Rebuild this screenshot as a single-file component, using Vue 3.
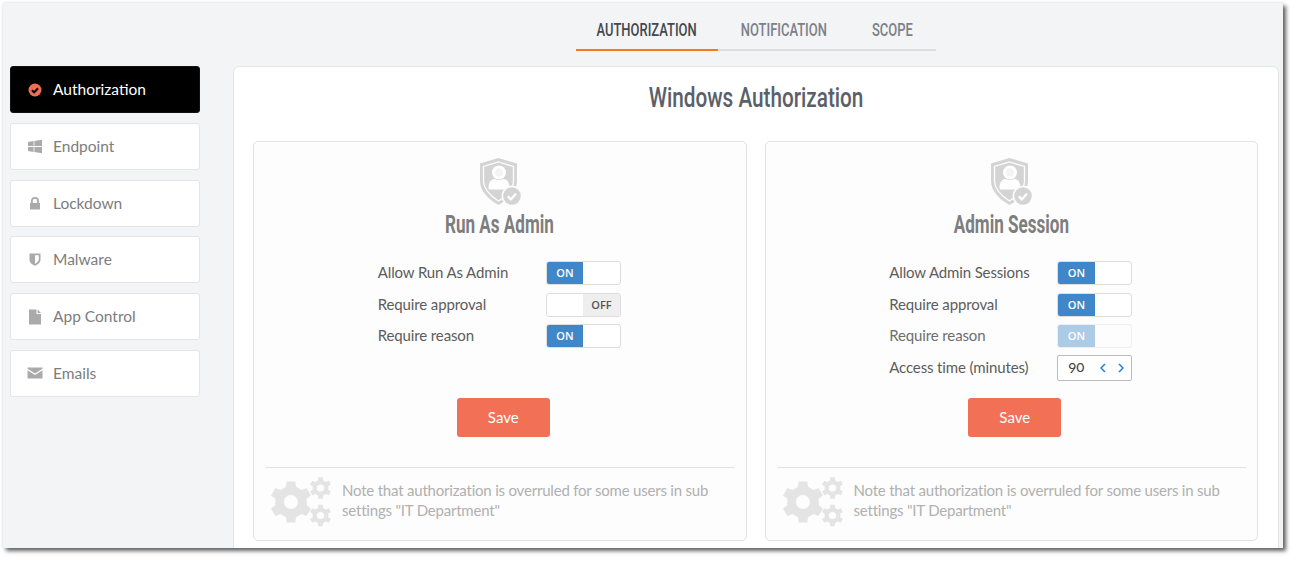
<script setup>
const nav = [
  { label: 'Authorization', icon: 'check', active: true },
  { label: 'Endpoint', icon: 'windows' },
  { label: 'Lockdown', icon: 'lock' },
  { label: 'Malware', icon: 'shield' },
  { label: 'App Control', icon: 'file' },
  { label: 'Emails', icon: 'mail' }
]
const tabs = [
  { label: 'AUTHORIZATION', width: 142, active: true },
  { label: 'NOTIFICATION', width: 131 },
  { label: 'SCOPE', width: 87 }
]
const cards = [
  {
    title: 'Run As Admin',
    rows: [
      { label: 'Allow Run As Admin', state: 'on' },
      { label: 'Require approval', state: 'off' },
      { label: 'Require reason', state: 'on' }
    ]
  },
  {
    title: 'Admin Session',
    rows: [
      { label: 'Allow Admin Sessions', state: 'on' },
      { label: 'Require approval', state: 'on' },
      { label: 'Require reason', state: 'on', disabled: true },
      { label: 'Access time (minutes)', state: 'number', value: 90 }
    ]
  }
]
function gear(cx, cy, outer, inner, hole, teeth) {
  const pts = []
  const step = (Math.PI * 2) / teeth
  for (let i = 0; i < teeth; i++) {
    const a = i * step - Math.PI / 2
    const w = step * 0.2
    const w2 = step * 0.3
    const add = (r, t) => pts.push((cx + r * Math.cos(t)).toFixed(2) + ' ' + (cy + r * Math.sin(t)).toFixed(2))
    add(inner, a - w2)
    add(outer, a - w)
    add(outer, a + w)
    add(inner, a + w2)
  }
  const ring = `M${cx - hole} ${cy}a${hole} ${hole} 0 1 0 ${hole * 2} 0a${hole} ${hole} 0 1 0 ${-hole * 2} 0z`
  return 'M' + pts.join('L') + 'z' + ring
}
const gears = gear(21, 25, 21, 16, 7, 6) + gear(50.5, 11, 11, 8, 3.6, 6) + gear(50.5, 38.5, 11, 8, 3.6, 6)
</script>

<template>
  <div class="page">
    <div class="window">
      <nav class="tabs">
        <div class="tabbar">
          <a
            v-for="t in tabs"
            :key="t.label"
            class="tab"
            :class="{ active: t.active }"
            :style="{ width: t.width + 'px' }"
          ><span class="narrow">{{ t.label }}</span></a>
        </div>
      </nav>
      <div class="body">
        <aside class="side">
          <a v-for="n in nav" :key="n.label" class="item" :class="{ active: n.active }">
            <span class="ico">
              <svg v-if="n.icon === 'check'" width="14" height="14" viewBox="0 0 14 14">
                <circle cx="7" cy="7" r="6.5" fill="#f26e52" />
                <path d="M3.9 7.2l2.2 2.2 4-4.2" fill="none" stroke="#000" stroke-width="2" />
              </svg>
              <svg v-else-if="n.icon === 'windows'" width="16" height="15" viewBox="0 0 16 15">
                <path fill="#aaa" d="M1 3l5.6-.9v5H1zM7.4 2l7.6-1.2v6.3H7.4zM1 8h5.6v5L1 12.100zM7.400 8H15v6.200l-7.600-1.200z" />
              </svg>
              <svg v-else-if="n.icon === 'lock'" width="12" height="13" viewBox="0 0 12 13">
                <path fill="#aaa" d="M1 6h1V4a4 4 0 0 1 8 0v2h1v6.500H1zM3.800 6h4.400V4a2.200 2.200 0 0 0-4.400 0z" />
              </svg>
              <svg v-else-if="n.icon === 'shield'" width="12" height="13" viewBox="0 0 12 13">
                <path fill="#aaa" fill-rule="evenodd" d="M.5.500h11v6.200c0 3-3 5-5.500 6C3.500 11.700.5 9.700.5 6.700zM6 2.200v8.700c1.700-.9 3.800-2.400 3.800-4.300V2.200z" />
              </svg>
              <svg v-else-if="n.icon === 'file'" width="14" height="16" viewBox="0 0 14 16">
                <path fill="#aaa" d="M1 .5h7.500v4.500H13v10.500H1zM9.600.500L13 3.900H9.600z" />
              </svg>
              <svg v-else width="16" height="12" viewBox="0 0 16 12">
                <path fill="#aaa" d="M.500.500h15v1.300L8 6.500.500 1.800zM.500 3.300L8 8l7.500-4.700v8.200H.500z" />
              </svg>
            </span>
            <span class="itemtext">{{ n.label }}</span>
          </a>
        </aside>
        <main class="panel">
          <h1 class="heading"><span class="narrow">Windows Authorization</span></h1>
          <div class="cards">
            <section v-for="c in cards" :key="c.title" class="card">
              <svg class="badge" width="44" height="50" viewBox="0 0 44 50">
                <path fill="#d4d4d4" d="M20.500 1L39 6.500V24c0 10-8 18-18.500 24C10 42 2 34 2 24V6.500z" />
                <path fill="none" stroke="#fdfdfd" stroke-width="1.300" d="M20.500 5L35.500 9.500V24c0 8-6.500 14.500-15 20C12 38.500 5.500 32 5.500 24V9.500z" />
                <circle cx="21" cy="15.500" r="7" fill="#fff" />
                <circle cx="21" cy="15.500" r="4.200" fill="#f4f4f4" />
                <path fill="#fff" d="M10.500 31c0-6 3-9 6-9 2.500 1.500 6.500 1.500 9 0 3 0 6 3 6 9 0 1-1 1.500-2 1.500H12.500c-1 0-2-.5-2-1.500z" />
                <circle cx="34" cy="39" r="10.500" fill="#fdfdfd" />
                <circle cx="34" cy="39" r="8.800" fill="#d4d4d4" />
                <path d="M29.800 39.300l3 3 5.200-5.600" fill="none" stroke="#fff" stroke-width="2.200" />
              </svg>
              <h2 class="title"><span class="narrow">{{ c.title }}</span></h2>
              <div class="form">
                <div v-for="r in c.rows" :key="r.label" class="row">
                  <span class="lbl" :class="{ dim: r.disabled }">{{ r.label }}</span>
                  <div v-if="r.state === 'number'" class="num">
                    <span class="val">{{ r.value }}</span>
                    <svg width="6" height="10" viewBox="0 0 6 10"><path d="M5 1L1 5l4 4" fill="none" stroke="#1b7fdc" stroke-width="1.500" /></svg>
                    <svg width="6" height="10" viewBox="0 0 6 10"><path d="M1 1l4 4-4 4" fill="none" stroke="#1b7fdc" stroke-width="1.500" /></svg>
                  </div>
                  <div v-else class="toggle" :class="{ disabled: r.disabled }">
                    <template v-if="r.state === 'on'">
                      <span class="half on">ON</span><span class="half"></span>
                    </template>
                    <template v-else>
                      <span class="half"></span><span class="half off">OFF</span>
                    </template>
                  </div>
                </div>
              </div>
              <button class="save" type="button">Save</button>
              <div class="note">
                <svg class="gears" width="62" height="50" viewBox="0 0 62 50"><path fill="#e4e4e4" fill-rule="evenodd" :d="gears" /></svg>
                <p>Note that authorization is overruled for some users in sub settings "IT Department"</p>
              </div>
            </section>
          </div>
        </main>
      </div>
    </div>
  </div>
</template>

<style>
html, body { background: #fff; }
</style>

<style scoped>
.page {
  box-sizing: border-box;
  width: 1297px;
  height: 563px;
  padding: 3px 0 0 3px;
  overflow: hidden;
  background: #fff;
}
.window {
  box-sizing: border-box;
  width: 1280px;
  height: 545px;
  background: #f3f4f6;
  overflow: hidden;
  box-shadow: 3px 3px 4px rgba(0, 0, 0, .6), 0 0 3px rgba(0, 0, 0, .12);
  font-family: Lato, "Open Sans", sans-serif;
  color: #666;
}
.narrow { display: inline-block; white-space: nowrap; }
.tabs { height: 63px; display: flex; justify-content: center; padding-left: 226px; }
.tabbar { display: flex; height: 48px; }
.tab {
  box-sizing: border-box;
  height: 48px;
  line-height: 53px;
  text-align: center;
  border-bottom: 2px solid #ddd;
  font-family: Roboto, sans-serif;
  font-size: 18px;
  font-weight: 500;
  color: #7c8188;
}
.tab .narrow { transform: scaleX(.72); }
.tab.active { color: #43484e; border-bottom-color: #f47c20; }
.body { display: flex; padding-left: 7px; }
.side { width: 190px; display: flex; flex-direction: column; gap: 9.800px; margin-right: 33px; }
.item {
  box-sizing: border-box;
  height: 47px;
  display: flex;
  align-items: center;
  background: #fff;
  border: 1px solid #e5e5e5;
  border-radius: 3px;
  font-size: 15.500px;
  color: #7d7d7d;
}
.itemtext { padding-bottom: 1px; }
.item.active { background: #000; border-color: #111; color: #fff; }
.ico { width: 42px; display: flex; justify-content: center; padding-left: 6px; box-sizing: border-box; }
.panel {
  box-sizing: border-box;
  width: 1046px;
  height: 600px;
  background: #fff;
  border: 1px solid #e5e5e5;
  border-radius: 6px;
  padding: 0 19px;
}
.heading {
  margin: 13px 0 0;
  height: 61px;
  text-align: center;
  font-family: Roboto, sans-serif;
  font-size: 28px;
  line-height: 36px;
  font-weight: 500;
  color: #5a6068;
}
.heading .narrow { transform: scaleX(.74); }
.cards { display: flex; gap: 18px; }
.card {
  box-sizing: border-box;
  width: 493.500px;
  height: 400px;
  background: #fdfdfd;
  border: 1px solid #e2e2e2;
  border-radius: 5px;
  padding: 15px 11px 0;
  display: flex;
  flex-direction: column;
  align-items: center;
}
.badge { flex: none; }
.title {
  margin: 2px 0 0;
  height: 30px;
  line-height: 30px;
  font-family: Roboto, sans-serif;
  font-size: 26.500px;
  font-weight: 700;
  color: #7e7e7e;
  white-space: nowrap;
}
.title .narrow { transform: scaleX(.645); }
.form {
  width: 243px;
  height: 137px;
  margin: 22px 1px 0 0;
  display: flex;
  flex-direction: column;
  gap: 7.500px;
}
.row { display: flex; justify-content: space-between; align-items: center; height: 24px; }
.lbl { font-size: 15px; letter-spacing: -.13px; color: #5c5c5c; padding-bottom: 2px; }
.lbl.dim { color: #6e6e6e; }
.toggle {
  box-sizing: border-box;
  width: 75px;
  height: 24px;
  display: flex;
  border: 1px solid #ddd;
  border-radius: 3px;
  background: #fff;
  overflow: hidden;
}
.toggle.disabled { opacity: .42; }
.half {
  flex: 1;
  text-align: center;
  font-family: "Open Sans", sans-serif;
  font-size: 11px;
  font-weight: 600;
  line-height: 22px;
}
.half.on { background: #3f87c8; color: #fff; }
.half.off { background: #eee; color: #555; }
.num {
  box-sizing: border-box;
  width: 75px;
  height: 26px;
  display: flex;
  align-items: center;
  gap: 12px;
  padding-left: 10px;
  background: #fff;
  border: 1px solid #bbb;
  border-radius: 2px;
  font-size: 15px;
  font-variant-numeric: oldstyle-nums;
  color: #444;
}
.val { width: 18px; margin-right: 2px; padding-bottom: 3px; }
.save {
  flex: none;
  width: 93px;
  height: 39px;
  margin-left: 7px;
  padding: 0 0 2px;
  border: 0;
  border-radius: 3px;
  background: #f17056;
  color: #fff;
  font-family: Lato, sans-serif;
  font-size: 15px;
}
.note {
  align-self: stretch;
  margin-top: 30px;
  border-top: 1px solid #e2e2e2;
  display: flex;
  padding: 9px 0 0 5px;
}
.gears { flex: none; margin-right: 10px; }
.note p {
  margin: 3px 0 0;
  width: 376px;
  font-size: 15px;
  line-height: 20px;
  letter-spacing: -.2px;
  color: #b0b0b0;
}
</style>
